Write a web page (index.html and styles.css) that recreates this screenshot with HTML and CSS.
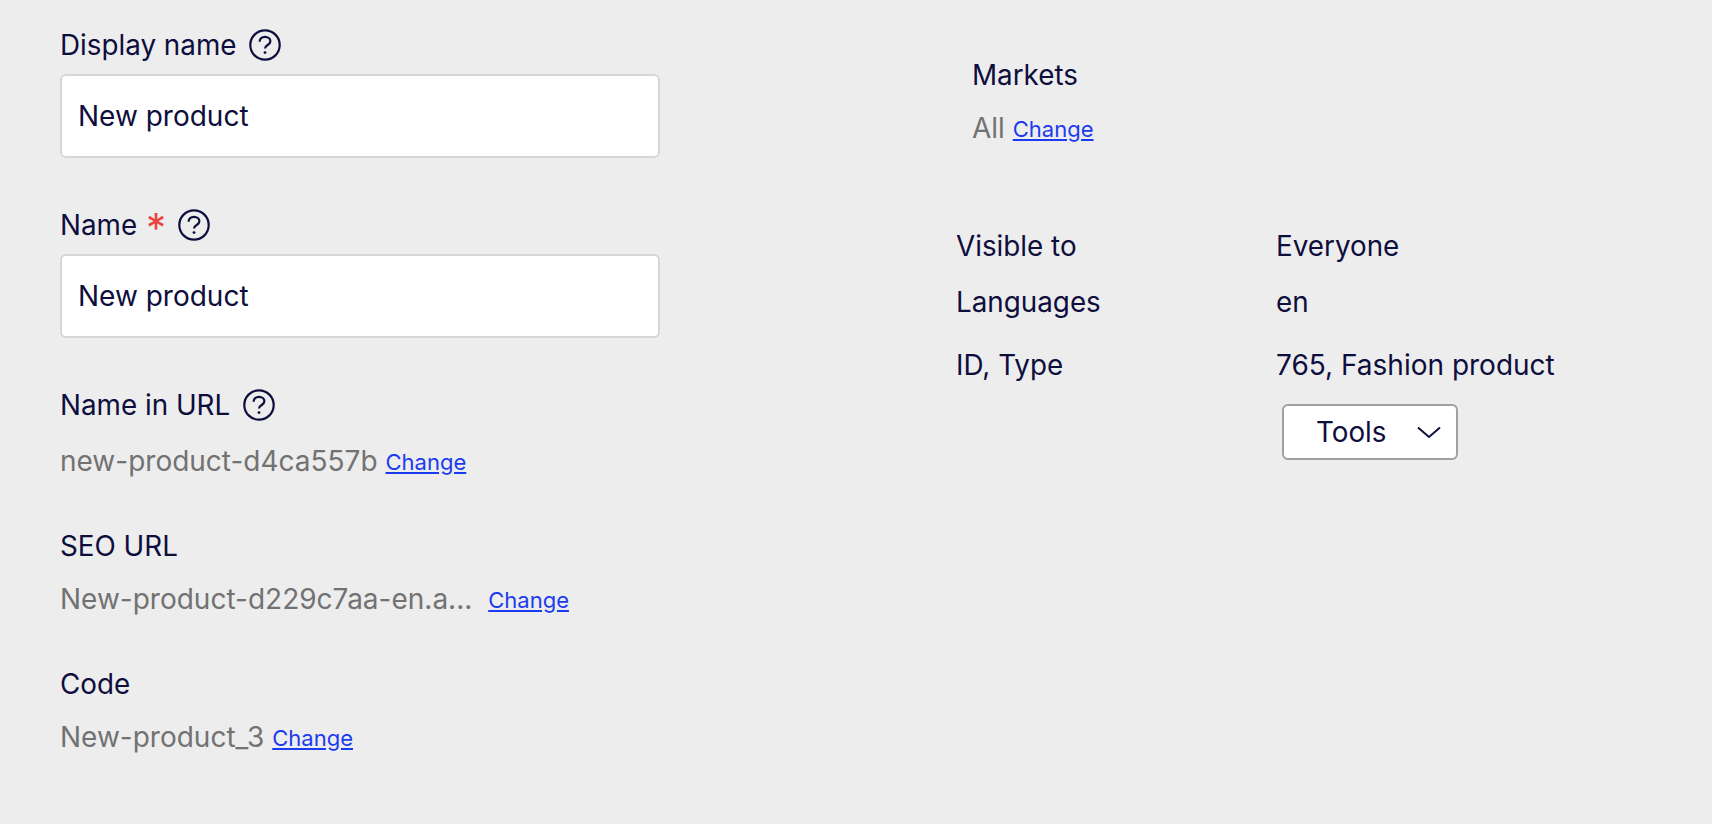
FILE: index.html
```html
<!DOCTYPE html>
<html lang="en">
<head>
<meta charset="utf-8">
<title>Product</title>
<link rel="stylesheet" href="styles.css">
</head>
<body>
<main class="page">
  <section class="left">
    <div class="field field-display">
      <div class="label">Display name
        <svg class="help" viewBox="0 0 32 32"><circle cx="16" cy="16" r="14.7"/><path d="M10.6 12.8c0-3 2.4-5 5.4-5s5.400 1.900 5.400 4.500c0 3.800-5.400 3.500-5.400 7.200"/><circle class="dot" cx="16" cy="23.600" r="1.400"/></svg>
      </div>
      <input class="input" value="New product">
    </div>
    <div class="field field-name">
      <div class="label">Name <span class="req">*</span>
        <svg class="help" viewBox="0 0 32 32"><circle cx="16" cy="16" r="14.7"/><path d="M10.6 12.8c0-3 2.4-5 5.4-5s5.400 1.900 5.400 4.500c0 3.800-5.400 3.500-5.400 7.200"/><circle class="dot" cx="16" cy="23.600" r="1.400"/></svg>
      </div>
      <input class="input" value="New product">
    </div>
    <div class="field field-url">
      <div class="label">Name in URL
        <svg class="help" viewBox="0 0 32 32"><circle cx="16" cy="16" r="14.7"/><path d="M10.6 12.8c0-3 2.4-5 5.4-5s5.400 1.900 5.400 4.500c0 3.800-5.400 3.500-5.400 7.200"/><circle class="dot" cx="16" cy="23.600" r="1.400"/></svg>
      </div>
      <div class="value">new-product-d4ca557b <a class="change" href="#">Change</a></div>
    </div>
    <div class="field field-seo">
      <div class="label">SEO URL</div>
      <div class="value">New-product-d229c7aa-en.a... <a class="change change-gap" href="#">Change</a></div>
    </div>
    <div class="field field-code">
      <div class="label">Code</div>
      <div class="value">New-product_3 <a class="change" href="#">Change</a></div>
    </div>
  </section>
  <section class="right">
    <div class="markets">
      <div class="label">Markets</div>
      <div class="value">All <a class="change" href="#">Change</a></div>
    </div>
    <dl class="meta">
      <dt>Visible to</dt><dd>Everyone</dd>
      <dt>Languages</dt><dd>en</dd>
      <dt>ID, Type</dt><dd class="meta-long">765, Fashion product</dd>
    </dl>
    <button class="tools" type="button">Tools
      <svg class="chev" viewBox="0 0 24 14"><path d="M1 2.500l11 9.500L23 2.500"/></svg>
    </button>
  </section>
</main>
</body>
</html>
```
FILE: styles.css
```css
* { box-sizing: border-box; }
html, body { margin: 0; height: 100%; }
body {
  background: #ededed;
  color: #0e0e3d;
  font-family: Inter, "Liberation Sans", sans-serif;
  font-size: 27.8px;
  overflow: hidden;
}
.page { display: flex; height: 824px; }
.left { width: 956px; padding: 28px 0 0 60px; flex: none; }
.right { flex: 1; padding-top: 58px; }
.field { display: flex; flex-direction: column; }
.label { display: flex; align-items: center; height: 34px; line-height: 34px; }
.help {
  width: 32px; height: 32px; margin-left: 13px; flex: none;
  fill: none; stroke: #0e0e3d; stroke-width: 2.2;
}
.help .dot { fill: #0e0e3d; stroke: none; }
.req { color: #e8453c; margin-left: 9px; font-size: 40px; height: 34px; line-height: 40px; }
.field-name .help { margin-left: 12px; }
.input {
  display: block;
  width: 600px; height: 84px;
  margin-top: 12px;
  padding: 0 16px;
  border: 2px solid #d6d6d6;
  border-radius: 6px;
  background: #fff;
  color: inherit;
  font: inherit;
  font-size: 28px;
}
.field-name { margin-top: 50px; }
.field-url { margin-top: 50px; }
.field-seo { margin-top: 50px; }
.field-code { margin-top: 50px; }
.value { color: #727272; font-size: 28px; height: 34px; line-height: 34px; margin-top: 19px; white-space: nowrap; }
.field-url .value { margin-top: 22px; }
.field-seo { margin-top: 51px; }
.field-code { margin-top: 51px; }
.change { color: #1b3bf0; font-size: 22px; margin-left: 0; vertical-align: 1px; }
.change-gap { margin-left: 8px; }
.markets { padding-left: 16px; }
.markets .value { margin-top: 19px; }
.meta {
  display: grid; grid-template-columns: 320px 1fr;
  margin: 84px 0 0;
  line-height: 34px;
}
.meta dt, .meta dd { margin: 0 0 22px; }
.meta dt:nth-of-type(2), .meta dd:nth-of-type(2) { margin-bottom: 29px; }
.meta dt:nth-of-type(3), .meta dd:nth-of-type(3) { margin-bottom: 0; }
.meta-long { font-size: 28px; }
.tools {
  display: flex; align-items: center;
  width: 176px; height: 56px;
  margin: 22px 0 0 326px;
  padding: 0 0 0 32px;
  border: 2px solid #a0a0a0;
  border-radius: 6px;
  background: #fff;
  color: inherit;
  font: inherit;
}
.chev { width: 24px; height: 14px; margin-left: 30px; fill: none; stroke: #0e0e3d; stroke-width: 2; }
```
